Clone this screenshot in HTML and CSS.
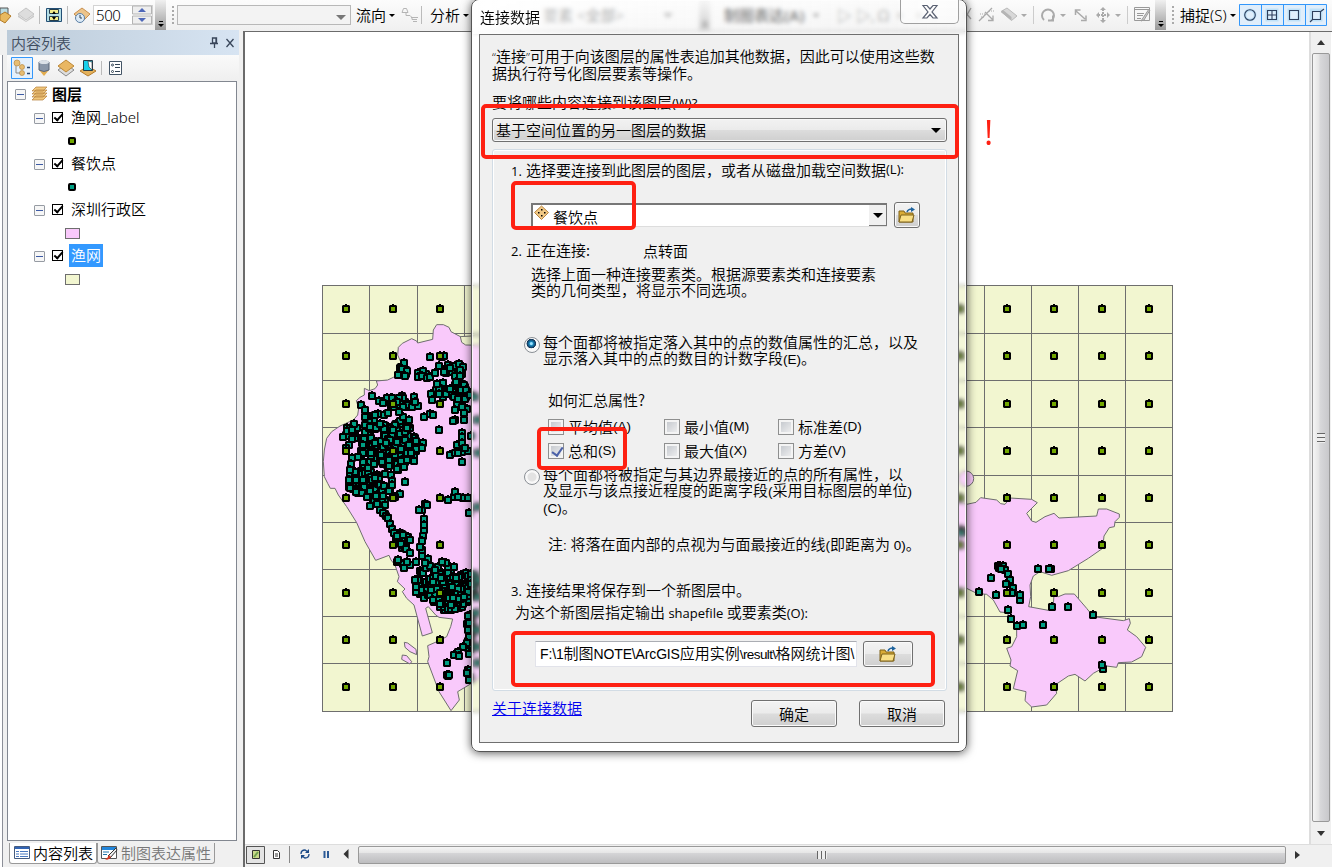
FILE: index.html
```html
<!DOCTYPE html>
<html lang="zh-CN">
<head>
<meta charset="utf-8">
<title>连接数据</title>
<link rel="stylesheet" href="styles.css">
</head>
<body>
<div class="app">
  <header class="toolbar">
    <svg class="tools-a" width="92" height="30" viewBox="0 0 92 30">
      <path d="M0 8h8v11H0z" fill="#b9dbe2" stroke="#555"/><path d="M0 15l5-3 6 4-6 7-5-3z" fill="#e8b95f" stroke="#b27b29"/>
      <path d="M18 14l8-6 8 6-8 6z" fill="#ddd" stroke="#c4c4c4"/><path d="M18 15l8 6 8-6v2l-8 5-8-5z" fill="#c9c9c9"/>
      <path d="M39.500 6v18M67.500 6v18" stroke="#bbb"/>
      <path d="M46.500 8.500h15v13h-15z" fill="#b4dde5" stroke="#234f75"/><path d="M49.500 9.500h9v4h-9zM49.500 16.500h9v4h-9z" fill="#f5ed8c" stroke="#263e4d"/><path d="M52 14l2-3 2 3zm0 3h4l-2 3z"/>
      <path d="M74 14l8-6 8 6-8 8z" fill="#edc48a" stroke="#c9904e"/><circle cx="80" cy="18" r="4.500" fill="#dceaf6" stroke="#5a7fa5"/><path d="M80 15v3h2" fill="none" stroke="#345"/>
    </svg>
    <div class="spin"><span>500</span><svg width="20" height="20" viewBox="0 0 20 20"><path d="M.5 1h19v8H.5zM.5 11h19v8H.5z" fill="#eee" stroke="#b4b4b4"/><path d="M6 7l4-4 4 4zM6 13h8l-4 4z" fill="#4f68b8"/></svg></div>
    <i class="overflow"></i><i class="grip"></i>
    <div class="tb-combo"><i class="arrow grey"></i></div>
    <span class="menu flow">流向</span><i class="arrow small"></i>
    <svg class="trace" width="18" height="18" viewBox="0 0 18 18" fill="none" stroke="#b5b5b5"><path d="M1 6.500h6l-1.500-4h-3zM5 6.500v3h4l2 2v2h5M10 11.500h7M12 15.500h4"/></svg>
    <i class="sep"></i><span class="menu">分析</span><i class="arrow small"></i>
    <div class="behind"><span class="field">要素 &lt;全部&gt;</span><i class="arrow grey"></i><i class="overflow"></i><span class="rep">制图表达(A)</span><i class="arrow small"></i><span class="pointer">▷ ▷, Ω ▫ ▫</span></div>
    <svg class="tools-b" width="188" height="30" viewBox="965 0 188 30" fill="none" stroke="#aaa">
      <path d="M964 20l7-12M965 12l6 7M979 21l13-13M985 12l8 8M988 20.500h5v-5" stroke-width="1.300"/><path d="M980 14h6M989 11h5M981 17h4" stroke-dasharray="1 1"/>
      <path d="M1001 11.500l6-3.500 10 8-5.500 4.500z" fill="#d8d8d8" stroke="#bbb"/><path d="M1001 12l10.500 8.500v-3.500L1003 10z" fill="#b5b5b5" stroke="none"/>
      <path d="M1033.500 6v18M1127.500 6v18" stroke="#ccc"/>
      <path d="M1044 20a6 6 0 1 1 8 0M1048 20.500h5v-5" stroke-width="2"/>
      <path d="M1076 11l9 8M1075.500 15v-5h5M1081 20.500h5v-5" stroke-width="1.500"/><path d="M1098 15h10M1103 9v12" stroke-dasharray="2 1" stroke-width="2"/><path d="M1100 10l3-3 3 3zm0 10h6l-3 3zM1099 12v6l-3-3zM1107 12v6l3-3z" fill="#aaa" stroke="none"/>
      <path d="M1021 14h6l-3 3zM1060 14h6l-3 3zM1115 14h6l-3 3z" fill="#aaa" stroke="none"/>
      <path d="M1134.500 7.500h15v13h-15zM1134 9.500h16M1137 13.500h7M1137 15.500h6M1137 18.500h4" stroke="#999"/><path d="M1149 9l-8 12 3-1 6-10z" fill="#ccc" stroke="#999"/>
    </svg>
    <i class="overflow o2"></i><i class="grip"></i>
    <span class="menu snap">捕捉(S)</span><i class="arrow small"></i>
    <svg class="snaps" width="90" height="22" viewBox="0 0 90 22" fill="none"><path d="M.5.500h87v21H.5zM22.500 0v22M44.500 0v22M66.500 0v22" fill="#e0eefb" stroke="#3397fa"/><g stroke="#bfe1f8" stroke-width="3"><circle cx="11" cy="11" r="5"/><path d="M28 6h10v10H28zM50 6h10v10H50zM72 6h10v10H72z"/></g><g stroke="#2e3f5c" stroke-width="1.100"><circle cx="11" cy="11" r="5.300"/><path d="M28.500 6.500h9v9h-9zM33 6v10M28 11h10M50.500 6.500h9v9h-9zM73.500 7.500h8v8h-8zM71 18l3-3M81 8l4-3"/></g></svg>
  </header>

  <main class="workspace">
    <div class="edge"></div>
    <aside class="toc">
      <div class="toc-head"><span>内容列表</span>
        <svg width="28" height="12" viewBox="0 0 28 12" fill="none" stroke="#39465a" stroke-width="1.300"><path d="M3.500 1h4v5h-4zM1 6.500h8M5.500 7v4M7 1v5M17.500 2l7 8M24.500 2l-7 8"/></svg></div>
      <div class="toc-tools">
        <svg width="130" height="24" viewBox="7 56 130 24"><path d="M11.500 57.500h21v21h-21z" fill="#e4f0fc" stroke="#3397fa"/>
          <g fill="#e7bd72" stroke="#b98a43" stroke-width=".7"><circle cx="17" cy="63" r="3"/><circle cx="22" cy="67" r="2.500"/><circle cx="22" cy="73" r="2.500"/></g><path d="M16 66v7h4" fill="none" stroke="#888"/><path d="M27 67.500h3M27 73.500h3" stroke="#29466e" stroke-width="1.500"/>
          <path d="M39 70l5 6 5-6z" fill="#e3ad4f"/><path d="M39 62q5-3 10 0v8q-5 3-10 0z" fill="#8996a8" stroke="#5b6779"/><ellipse cx="44" cy="62" rx="5" ry="2" fill="#dbe1e8"/>
          <path d="M58 70l8-6 8 6-8 6z" fill="#ddd" stroke="#888"/><path d="M58 66l8-6 8 6-8 6z" fill="#e9b763" stroke="#bd8837"/>
          <path d="M80 71l8-5 8 5-8 5z" fill="#e4b15a" stroke="#b47b2c"/><path d="M83.500 60.500h9v10h-9z" fill="#18cfea" stroke="#253c4b"/><path d="M88 61l4 1v8l-3-3z" fill="#fff" stroke="#333" stroke-width=".6"/>
          <path d="M101.500 61v14" stroke="#bbb"/><path d="M109.500 61.500h12v13h-12z" fill="#fff" stroke="#456"/><g fill="none" stroke="#345"><circle cx="112.500" cy="65" r="1"/><circle cx="112.500" cy="71.500" r="1"/><path d="M115 64.500h5M115 67.500h5M115 71.500h5"/></g></svg>
      </div>
      <div class="tree">
        <div class="row root"><i class="exp"></i><svg width="17" height="16" viewBox="0 0 17 16" fill="#f0c67c" stroke="#b6803a" stroke-width=".7"><path d="M1 14l4-4h11l-4 4zM1 11l4-4h11l-4 4zM1 8l4-4h11l-4 4zM1 5l4-4h11l-4 4z"/></svg><b>图层</b></div>
        <div class="row"><i class="exp"></i><i class="tick"></i><span>渔网_label</span></div>
        <div class="row sym"><i class="dot olive"></i></div>
        <div class="row"><i class="exp"></i><i class="tick"></i><span>餐饮点</span></div>
        <div class="row sym"><i class="dot teal"></i></div>
        <div class="row"><i class="exp"></i><i class="tick"></i><span>深圳行政区</span></div>
        <div class="row sym"><i class="patch pink"></i></div>
        <div class="row"><i class="exp"></i><i class="tick"></i><span class="selected">渔网</span></div>
        <div class="row sym"><i class="patch cream"></i></div>
      </div>
      <nav class="tabs">
        <span class="tab on"><svg width="16" height="14" viewBox="0 0 16 14"><path d="M.5.500h15v12H.5z" fill="#fff" stroke="#445b80"/><path d="M1 1h14v2H1z" fill="#3264b4"/><path d="M2 5.500h3M2 8h3M2 10.500h3M6 5.500h8M6 8h8M6 10.500h8" stroke="#4878c0"/></svg>内容列表</span>
        <span class="tab"><svg width="17" height="16" viewBox="0 0 17 16"><path d="M.5 1.500h15v12H.5z" fill="#fff" stroke="#555"/><path d="M1 2h14v3H1z" fill="#2386db"/><path d="M2 7h6M2 9.500h4" stroke="#27a"/><path d="M15 3L7 11l2 2 7-8z" fill="#eee" stroke="#333"/><path d="M8 10l2 2q-3 4-6 2 3-1 4-4z" fill="#d8351e"/></svg>制图表达属性</span>
      </nav>
    </aside>
    <section class="view">
      <div class="view-main">
        <svg id="map" class="map" viewBox="245 32 1064 812" width="1064" height="812"></svg>
        <div class="vscroll"><i class="up"></i><div class="vthumb"><i></i></div><i class="down"></i></div>
      </div>
      <div class="view-foot">
        <svg width="113" height="20" viewBox="245 845 113 20" fill="none"><path d="M246.500 846.500h18v17h-18z" fill="#e4e4e4" stroke="#555"/><path d="M252.500 850.500h7v8h-7z" fill="#c9d98a" stroke="#333"/><path d="M254 857l4-5" stroke="#6ea04e" stroke-width="2"/><path d="M273.500 850.500h4l2 2v6h-6zM275 854h3M275 856h3" fill="#fff" stroke="#333"/><path d="M289.500 846v17" stroke="#888"/><path d="M301 854q0-4 4-4l3 2M309 854q0 4-4 4l-3-2" stroke="#1c4a87" stroke-width="1.300"/><path d="M309 849v4h-4zM301 859v-4h4z" fill="#1c4a87"/><path d="M324.500 851v7M328 851v7" stroke="#2b5a96" stroke-width="2"/><path d="M348.500 849v10l-5-5z" fill="#333"/></svg>
        <div class="hthumb"><i></i></div><i class="right"></i>
      </div>
    </section>
  </main>

  <section class="dialog">
    <div class="caption"><span>连接数据</span><div class="close"><svg width="18" height="16" viewBox="0 0 18 16"><path d="M2 1.500h4l3 3.500 3-3.500h4L11 8l5 6h-4l-3-3.500L6 14H2l5-6z" fill="#fff" stroke="#5b6273" stroke-width="1.200"/></svg></div></div>
    <div class="client">
      <p class="intro"><q>“</q>连接<q>”</q>可用于向该图层的属性表追加其他数据，因此可以使用这些数<br>据执行符号化图层要素等操作。</p>
      <p class="ask">要将哪些内容连接到该图层<s>(W)?</s></p>
      <div class="select"><span>基于空间位置的另一图层的数据</span><i class="arrow"></i></div>
      <div class="group">
        <p class="step s1"><s>1.</s>选择要连接到此图层的图层，或者从磁盘加载空间数据<s>(L):</s></p>
        <div class="layer-row">
          <div class="layer"><svg width="17" height="17" viewBox="0 0 17 17"><path d="M8.500 1l7 6.500-7 7-7-7z" fill="#f0c885" stroke="#b9853f"/><path d="M8 4h1.500v1.500H8zM5 7h1.500v1.500H5zM11 7h1.500v1.500H11zM8 10h1.500v1.500H8z"/></svg><span>餐饮点</span><i class="drop"></i></div>
          <div class="btn browse"><svg width="18" height="16" viewBox="0 0 18 16"><path d="M1 4h5l1 2h8v9H1z" fill="#d9ab35" stroke="#7e621b"/><path d="M1 15l2-7h13l-2 7z" fill="#f9df85" stroke="#7e621b"/><path d="M9 5q1-3 5-3" fill="none" stroke="#1e639d" stroke-width="1.500"/><path d="M13 0l4 2.500-4 2.500z" fill="#1e639d"/></svg></div>
        </div>
        <p class="step s2"><s>2.</s>正在连接:<span class="mode">点转面</span></p>
        <p class="hint">选择上面一种连接要素类。根据源要素类和连接要素<br>类的几何类型，将显示不同选项。</p>
        <div class="option o-first"><i class="radio on"></i><p>每个面都将被指定落入其中的点的数值属性的汇总，以及<br>显示落入其中的点的数目的计数字段<s class="ar">(E)</s>。</p></div>
        <p class="how">如何汇总属性?</p>
        <div class="checks">
          <label><i class="cb"></i>平均值<s class="ar">(A)</s></label><label><i class="cb"></i>最小值<s class="ar">(M)</s></label><label><i class="cb"></i>标准差<s class="ar">(D)</s></label>
          <label><i class="cb on"></i>总和<s class="ar">(S)</s></label><label><i class="cb"></i>最大值<s class="ar">(X)</s></label><label><i class="cb"></i>方差<s class="ar">(V)</s></label>
        </div>
        <div class="option o-second"><i class="radio"></i><p>每个面都将被指定与其边界最接近的点的所有属性，以<br>及显示与该点接近程度的距离字段<s class="ar">(</s>采用目标图层的单位<s class="ar">)</s><br><s class="ar">(C)</s>。</p></div>
        <p class="note">注<s class="ar">: </s>将落在面内部的点视为与面最接近的线<s class="ar">(</s>即距离为<s class="ar"> 0)</s>。</p>
        <p class="step s3"><s>3.</s>连接结果将保存到一个新图层中。</p>
        <p class="out">为这个新图层指定输出<s> shapefile </s>或要素类<s>(O):</s></p>
        <div class="path-row"><div class="path"><s class="ar">F:\1</s>制图<s class="ar">NOTE\ArcGIS</s>应用实例<s class="ar tight">\result\</s>格网统计图<s class="ar">\</s></div>
          <div class="btn wide"><svg width="18" height="16" viewBox="0 0 18 16"><path d="M1 4h5l1 2h8v9H1z" fill="#d9ab35" stroke="#7e621b"/><path d="M1 15l2-7h13l-2 7z" fill="#f9df85" stroke="#7e621b"/><path d="M9 5q1-3 5-3" fill="none" stroke="#1e639d" stroke-width="1.500"/><path d="M13 0l4 2.500-4 2.500z" fill="#1e639d"/></svg></div></div>
      </div>
      <div class="actions"><a>关于连接数据</a><div class="btn ok">确定</div><div class="btn cancel">取消</div></div>
    </div>
  </section>

  <i class="mark m1"></i><i class="mark m2"></i><i class="mark m3"></i><i class="mark m4"></i>
  <span class="bang">!</span>
</div>
<script src="map.js"></script>
</body>
</html>
```
FILE: styles.css
```css
* { box-sizing: border-box; }
body { margin: 0; background: #f0f0f0; overflow: hidden; font: 350 15px/20px "Noto Sans", "Noto Sans CJK SC", sans-serif; color: #000; }
p { margin: 0; }
i { display: block; flex: none; font-style: normal; }
svg { flex: none; display: block; }
.app { position: relative; width: 1332px; height: 867px; display: flex; flex-direction: column; overflow: hidden; }

.toolbar { height: 30px; flex: none; display: flex; align-items: center; background: linear-gradient(#fcfcfc, #f0f0f0); white-space: nowrap; overflow: hidden; }
.toolbar > * { flex: none; }
.menu { line-height: 30px; }
.flow { margin-left: -1px; }
.sep { width: 1px; height: 18px; background: #bbb; margin: 0 8px 0 2px; }
.arrow { width: 0; height: 0; border: solid transparent; border-width: 5px 5px 0; border-top-color: #000; }
.arrow.small { border-width: 3px 3px 0; border-top-color: #000; margin-left: 3px; }
.arrow.grey { border-top-color: #777; }
.spin { width: 60px; height: 20px; margin-left: 1px; display: flex; justify-content: space-between; align-items: center; border: 1px solid #d3d3d3; background: #fff; padding-left: 2px; font-size: 15px; line-height: 18px; }
.spin span { letter-spacing: -.4px; }
.overflow { width: 11px; height: 30px; margin-left: 2px; background: linear-gradient(#f0f0f0, #999); display: flex; align-items: flex-end; justify-content: center; padding-bottom: 3px; }
.overflow::after { content: ""; border: solid transparent; border-width: 3px 3px 0; border-top-color: #000; box-shadow: 0 -4px 0 -1px #000; }
.o2 { margin-left: 2px; }
.grip { width: 2px; height: 18px; margin: 0 3px 0 6px; background: repeating-linear-gradient(#aaa 0 2px, transparent 2px 4px); }
.tb-combo { width: 174px; height: 20px; border: 1px solid #b8b8b8; background: #f3f3f3; display: flex; justify-content: flex-end; align-items: center; padding: 4px 4px 0; margin-right: 6px; }
.trace { margin-left: 6px; }
.behind { width: 494px; height: 30px; display: flex; align-items: center; padding-left: 74px; color: #222; }
.behind .field { width: 120px; }
.behind .overflow { margin-left: 26px; }
.behind .rep { width: 86px; margin-left: 14px; font-weight: bold; }
.behind .pointer { margin-left: 18px; }
.tools-b { margin-left: 2px; }
.snap { margin-left: 3px; }
.snaps { margin-left: 3px; }

.workspace { flex: 1; min-height: 0; display: flex; }
.edge { width: 7px; background: linear-gradient(90deg, #fff 0 2px, #8c8f98 2px 3px, #f0f0f0 3px); margin-top: 25px; flex: none; }
.toc { width: 232px; flex: none; display: flex; flex-direction: column; }
.toc-head { height: 25px; flex: none; display: flex; align-items: center; justify-content: space-between; padding: 0 2px 0 4px; background: linear-gradient(90deg, #bccbd9, #d7e4f2); color: #3f4c5e; }
.toc-tools { height: 26px; flex: none; padding-top: 1px; background: linear-gradient(#fafafa, #efefef); }
.tree { width: 230px; height: 760px; flex: none; background: #fff; border: 1px solid #828790; padding-top: 1px; }
.row { height: 23px; display: flex; align-items: center; padding-left: 26px; }
.row.root { padding: 0 0 2px 7px; }
.row.root svg { margin: 0 4px 0 5px; }
.row.sym { padding-left: 57px; }
.exp { width: 11px; height: 11px; border: 1px solid #969ba3; border-radius: 1px; margin-top: 2px; background: linear-gradient(#3d5ba5, #3d5ba5) center/7px 1px no-repeat, #f6f6f6; }
.tick { width: 11px; height: 11px; border: 1px solid #000; margin: 0 6px 0 7px; position: relative; }
.tick::after { content: ""; position: absolute; left: 1px; top: 1px; width: 7px; height: 3px; border: solid #000; border-width: 0 0 2px 2px; transform: rotate(-48deg); }
.row span { line-height: 23px; padding: 0 2px; }
.selected { background: #3399ff; color: #fff; }
.dot { width: 8px; height: 8px; border: 2px solid #000; border-radius: 2px; margin-left: 3px; }
.olive { background: #73a800; }
.teal { background: #00a084; }
.patch { width: 15px; height: 11px; border: 1px solid #6e6e6e; margin-top: 1px; }
.pink { background: #f9c9fb; }
.cream { background: #f2f6d0; }
.tabs { display: flex; padding: 2px 0 0 2px; }
.tab { height: 21px; display: flex; align-items: center; gap: 3px; padding: 0 3px; color: #777; border: 1px solid #999; border-top: 0; border-radius: 0 0 3px 3px; line-height: 20px; white-space: nowrap; }
.tab.on { background: #fff; color: #000; padding-left: 4px; }

.view { margin: 1px 0 0 4px; width: 1089px; flex: none; display: flex; flex-direction: column; border: solid #6b6b6b; border-width: 1px 0 0 2px; }
.view-main { height: 812px; display: flex; background: #fff; }
.map { width: 1064px; }
.vscroll { width: 22px; flex: none; display: flex; flex-direction: column; align-items: center; background: #f0f0f0; border-left: 2px solid #ddd; padding-right: 1px; }
.up, .down { border: 4px solid transparent; border-top: 0; border-bottom: 5px solid #333; margin: 8px 0; }
.down { border-bottom: 0; border-top: 5px solid #333; margin: 9px 0 0; }
.vthumb { width: 18px; height: 769px; border: 1px solid #999; border-radius: 2px; background: linear-gradient(90deg, #f5f5f5, #e6e6e6 35%, #d8d8da 45%, #c8c8cb); display: flex; align-items: center; justify-content: center; }
.vthumb i { width: 8px; height: 10px; background: repeating-linear-gradient(#666 0 1px, #eee 1px 4px); }
.view-foot { height: 21px; display: flex; align-items: center; background: #f0f0f0; border-top: 1px solid #ddd; }
.hthumb { width: 928px; height: 18px; border: 1px solid #999; border-radius: 2px; background: linear-gradient(#f5f5f5, #e6e6e6 35%, #d4d4d6 40%, #bdbdbf); display: flex; align-items: center; justify-content: center; }
.hthumb i { width: 10px; height: 8px; background: repeating-linear-gradient(90deg, #666 0 1px, #eee 1px 4px); }
.right { border: 4px solid transparent; border-right: 0; border-left: 5px solid #333; margin-left: 9px; }

.dialog { position: absolute; left: 471px; top: -1px; width: 496px; height: 753px; border: 1px solid #555; border-radius: 8px; padding: 0 7px 8px; background: rgba(255,255,255,.2); backdrop-filter: blur(2px); box-shadow: inset 0 0 0 1px rgba(255,255,255,.75), 0 1px 10px rgba(0,0,0,.65); display: flex; flex-direction: column; }
.caption { height: 34px; flex: none; margin: 0 -6px; padding: 0 6px 0 7px; display: flex; justify-content: space-between; background: linear-gradient(90deg, rgba(255,255,255,.95), rgba(255,255,255,.5) 20%, rgba(245,245,245,.3)); border-radius: 7px 7px 0 0; }
.caption span { line-height: 35px; }
.close { width: 59px; height: 24px; border: 1px solid #a0a0a0; border-top: 0; border-radius: 0 0 5px 5px; background: rgba(255,255,255,.5); display: flex; justify-content: center; padding-top: 4px; }
.client { flex: 1; border: 1px solid #6f6f6f; background: #f0f0f0; padding: 13px 11px 0 12px; font: 350 15px/16px "Noto Sans CJK SC", sans-serif; white-space: nowrap; }
.client s { font: 13px/14px "Open Sans", sans-serif; text-decoration: none; white-space: pre; }
.client s.ar { font: 13.500px/14px "Liberation Sans", sans-serif; }
.client q { quotes: none; font-family: "Open Sans", sans-serif; font-size: 13px; }
.client p { height: 16px; }
.client .intro { height: 32px; }
.ask { margin-top: 14px; }
.select { height: 24px; margin-top: 8px; border: 1px solid #707070; border-radius: 3px; background: linear-gradient(#f2f2f2, #ebebeb 48%, #dcdcdc 52%, #cfcfcf); box-shadow: inset 0 0 0 1px #f8f8f8; display: flex; justify-content: space-between; align-items: center; padding: 0 5px 0 3px; }
.group { width: 455px; height: 542px; margin-top: 7px; border: 1px solid #d2dce5; border-radius: 3px; box-shadow: inset 0 0 0 1px #fff; padding: 12px 0 0 18px; }
.step { display: flex; }
.step > s:first-child { width: 15px; padding-top: 2px; }
.layer-row { display: flex; margin: 24px 0 0 20px; align-items: center; gap: 7px; height: 26px; }
.layer { width: 356px; height: 24px; border: solid #777; border-width: 2px 0 0 2px; box-shadow: inset -1px -1px #ddd; background: #fff; display: flex; }
.layer span { line-height: 23px; margin-left: 3px; flex: 1; }
.drop { width: 18px; height: 21px; background: #f0f0f0; border: solid #777; border-width: 0 1px 1px 0; display: flex; align-items: center; justify-content: center; }
.drop::after { content: ""; border: 5px solid transparent; border-bottom: 0; border-top-color: #000; }
.btn { border: 1px solid #707070; border-radius: 3px; height: 27px; background: linear-gradient(#f3f3f3, #ebebeb 48%, #dcdcdc 52%, #cfcfcf); box-shadow: inset 0 0 0 1px #fafafa; display: flex; align-items: center; justify-content: center; }
.browse { width: 26px; height: 26px; }
.s2 { margin-top: 14px; }
.mode { margin: 1px 0 0 53px; }
.client .hint { margin: 8px 0 0 20px; height: 32px; }
.option { display: flex; margin-left: 13px; gap: 3px; }
.o-first { margin-top: 36px; height: 32px; }
.radio { width: 16px; height: 16px; border-radius: 50%; border: 1px solid #8a8f95; background: radial-gradient(#e2e2e2 0 4px, #f8f8f8 5px); margin-top: 3px; }
.radio.on { background: radial-gradient(circle at 45% 40%, #9be3ff 0 1px, #1887bd 2px, #123052 4.500px, #f8f8f8 5px); }
.how { margin: 26px 0 0 37px; }
.checks { display: grid; grid-template-columns: 116px 114px 120px; grid-auto-rows: 24px; margin: 7px 0 0 37px; }
.checks label { display: flex; align-items: center; }
.cb { width: 16px; height: 16px; margin-right: 4px; border: 1px solid #8e8f8f; box-shadow: inset 0 0 0 2px #f4f4f4; background: linear-gradient(135deg, #bfc3c9, #f4f4f4); }
.cb.on { position: relative; }
.cb.on::after { content: ""; position: absolute; left: 5px; top: 1px; width: 5px; height: 9px; border: solid #4b61a8; border-width: 0 2px 2px 0; transform: rotate(35deg); }
.o-second { margin-top: 3px; height: 48px; }
.note { margin: 22px 0 0 37px; }
.s3 { margin-top: 30px; }
.out { margin: 6px 0 0 4px; }
.path-row { display: flex; align-items: center; gap: 6px; margin: 21px 0 0 24px; }
.path { width: 322px; height: 26px; background: #fff; border: 1px solid #e2e3ea; border-top-color: #abadb3; padding-left: 4px; line-height: 22px; }
.client .path s.ar { font-size: 14px; letter-spacing: -.15px; }
.client .path s.tight { letter-spacing: -.6px; font-size: 13.500px; }
.wide { width: 50px; height: 26px; }
.actions { display: flex; padding-top: 9px; }
.actions a { color: #0000ee; text-decoration: underline; width: 259px; }
.ok, .cancel { width: 86px; }
.cancel { margin-left: 22px; }

.mark { position: absolute; border: 4px solid #fe2012; border-radius: 5px; }
.m1 { left: 481px; top: 104px; width: 478px; height: 55px; }
.m2 { left: 511px; top: 181px; width: 125px; height: 49px; }
.m3 { left: 537px; top: 427px; width: 90px; height: 43px; }
.m4 { left: 511px; top: 631px; width: 424px; height: 56px; }
.bang { position: absolute; left: 984px; top: 112px; font: 35px/40px "Open Sans", sans-serif; color: #fe2012; }
```
FILE: map.js
```js
const CREAM = '#f2f6d0', PINK = '#f9c9fb', LINE = '#6e6e6e';
const K = 1 / 3;
const LEFT = [315, 280], RIGHT = [950, 460];

// Outlines, three units per pixel.
const west = '500,168 470,170 440,172 408,155 402,142 385,134 365,134 355,150 353,178 308,189 305,183 290,176 262,190 250,202 248,225 257,245 262,262 250,285 235,292 218,300 184,303 188,315 180,326 163,332 148,325 148,345 135,352 124,362 131,385 128,405 115,420 75,438 50,455 35,475 28,510 25,545 28,590 38,610 46,625 60,625 70,645 95,680 125,728 150,785 182,841 222,826 228,840 240,855 252,890 247,905 270,927 262,935 275,955 297,975 322,1068 352,1058 332,985 340,980 362,1005 372,1012 413,1017 407,1040 395,1070 368,1084 338,1097 342,1130 338,1145 372,1235 408,1292 433,1260 428,1235 470,1210 500,1190';
const east = '0,120 50,133 78,127 92,113 140,120 152,131 165,133 180,114 245,118 262,128 230,160 245,183 258,187 285,170 312,160 327,174 440,168 445,147 470,147 508,162 508,172 495,185 493,200 478,203 462,228 458,265 415,295 355,332 305,346 270,335 250,348 240,375 242,410 236,440 295,451 310,435 312,402 325,410 345,402 373,402 410,445 430,470 520,482 538,476 541,490 532,510 560,530 587,562 575,590 545,606 505,608 500,622 470,618 430,640 405,663 375,643 355,648 315,675 320,700 290,735 245,741 225,722 228,695 190,686 203,632 180,618 183,600 170,565 185,560 200,530 200,500 180,478 172,458 150,456 130,420 110,403 80,400 50,385 0,380';
const lagoon = '436,170 500,166 500,196 452,195 440,187';
const islets = ['268,1087 278,1089 303,1108 305,1124 285,1115 270,1102', '262,1125 275,1127 290,1145 285,1152 260,1138'];

const westPts = `345,231 380,232 388,228 268,250 261,267 275,272 250,285 269,288 323,272 310,290 321,288 335,293 345,290 360,279 372,258 387,276 400,255 420,258 432,252 445,262 436,270 410,275 420,287 435,288 405,265
384,308 372,324 365,312 348,342 351,359 372,343 392,341 405,327 423,306 440,312 447,315 438,330 454,330 430,357 450,357 456,387 465,345 420,390 447,398 419,420 447,420 415,424 442,380
327,411 345,402 355,405 372,450 441,458 441,472 425,495 441,490 405,525 420,518 441,517 459,513 442,547 467,467 450,505 430,520
170,348 137,375 150,390 192,364 210,364 217,355 232,355 252,354 297,351 275,375 291,381 310,378 265,380 245,365 300,365 205,368 150,410 180,405 207,405 195,432 150,436 165,440 218,400
118,432 97,452 112,450 83,471 102,495 110,478 92,505 147,477 168,474 145,495 180,490 143,520 167,518 197,524 145,545 160,563 111,535 130,530 108,552 105,570 177,552
231,465 255,462 225,480 245,485 213,490 270,480 282,495 303,483 324,489 303,507 322,505 287,520 257,507 240,525 221,540 297,543 277,540 246,567 267,562 228,585 210,582
255,423 240,435 279,435 283,420 265,410 252,395 271,455 275,445 235,450 102,600 122,601 146,621 105,624 124,636 141,639 171,600 180,595 165,632 156,651 183,648 204,648 221,633 232,602 231,615 256,641 270,606 165,678 187,672 211,675 195,690 210,703 219,714 240,650
330,671 321,690 337,675 312,690 327,716 399,660 417,650 421,637 443,654 460,655 430,650 462,699
205,700 212,708 219,714 225,732 231,747 238,758 246,768 278,771 285,780 265,765 258,792 273,807 284,820 246,846 265,852 267,864 285,855 303,846 321,828 340,837 320,810 315,801 323,768 327,750 327,735 320,783 345,858 369,861 393,849 380,845 330,850 360,870 250,840 275,845
458,1008 463,1030 460,1050 462,1070 455,1090 444,1102 430,1115 417,1125 432,1128 396,1149 399,1188 395,1185 402,1186 460,1170 465,1190 462,1200 456,1180 480,350 485,420 488,520 486,680 488,900 485,950 484,1000 487,1050 485,1100 486,1150`;
const eastPts = '143,318 150,317 160,318 148,325 165,330 153,326 173,342 180,360 167,372 189,384 185,398 210,405 210,420 210,405 123,354 87,396 138,405 174,450 183,477 201,498 219,495 279,495 264,327 297,327 302,327 298,327 306,441 354,441 429,465 459,627 456,615 33,210 37,215 34,218';

// Dense clusters: centre x, centre y, radius x, radius y, count.
const clusters = [[160,500,22,90,48],[195,440,45,50,20],[255,490,55,62,60],[255,365,50,20,20],[145,605,50,35,42],[190,640,40,28,25],[225,545,45,30,20],[415,270,32,20,16],[410,328,50,26,26],[350,910,55,52,55],[405,930,62,70,85],[450,920,45,48,45],[415,965,45,25,25],[110,455,22,20,12],[440,340,25,38,15],[265,780,22,28,9],[465,1060,10,75,26],[325,280,18,10,5],[264,272,12,25,6]];

let seed = 17;
const rnd = () => (seed = (seed * 16807) % 2147483647) / 2147483647;
const parse = s => s.trim().split(/\s+/).map(p => p.split(',').map(Number));
const symbol = (x, y, c) => {
  x = Math.round(x); y = Math.round(y);
  return `<path d="M${x - 3} ${y - 4}h2v-1h2v1h2l1 1v6l-1 1h-6l-1-1v-6z" fill="#000"/><rect x="${x - 2}" y="${y - 2}" width="4" height="4" fill="${c}"/>`;
};
const place = ([ox, oy]) => ([x, y]) => symbol(ox + x * K, oy + y * K, '#00a084');

const cols = [322, 369, 417, 464, 511, 558, 606, 653, 700, 747, 795, 842, 889, 936, 984, 1031, 1078, 1125, 1172];
const rows = [285, 333, 380, 427, 475, 522, 569, 616, 663, 711];
let out = `<rect x="322.500" y="285.500" width="850" height="426" fill="${CREAM}"/>`;
const lines = cols.map(x => `M${x + .5} 285V712`).join('') + rows.map(y => `M322 ${y + .5}H1173`).join('');
out += `<path d="${lines}" stroke="${LINE}" fill="none" shape-rendering="crispEdges"/>`;
const poly = (pts, fill) => `<polygon points="${pts}" fill="${fill}" stroke="${LINE}" stroke-width="3"/>`;
out += `<g transform="translate(${LEFT}) scale(${K})">${poly(west, PINK)}${poly(lagoon, CREAM)}${islets.map(p => poly(p, PINK)).join('')}</g>`;
out += `<g transform="translate(${RIGHT}) scale(${K})">${poly(east, PINK)}<circle cx="48" cy="56" r="23" fill="${PINK}" stroke="${LINE}" stroke-width="3"/></g>`;

const random = [];
for (const [cx, cy, rx, ry, n] of clusters) {
  for (let i = 0; i < n; i++) {
    const a = rnd() * 6.2832, r = Math.sqrt(rnd());
    random.push([cx + rx * r * Math.cos(a), cy + ry * r * Math.sin(a)]);
  }
}
out += random.map(place(LEFT)).join('') + parse(westPts).map(place(LEFT)).join('') + parse(eastPts).map(place(RIGHT)).join('');
for (let i = 0; i < 18; i++)
  for (let j = 0; j < 9; j++) out += symbol(346 + i * 47.22, 309 + j * 47.250, '#73a800');
document.getElementById('map').innerHTML = out;
```
